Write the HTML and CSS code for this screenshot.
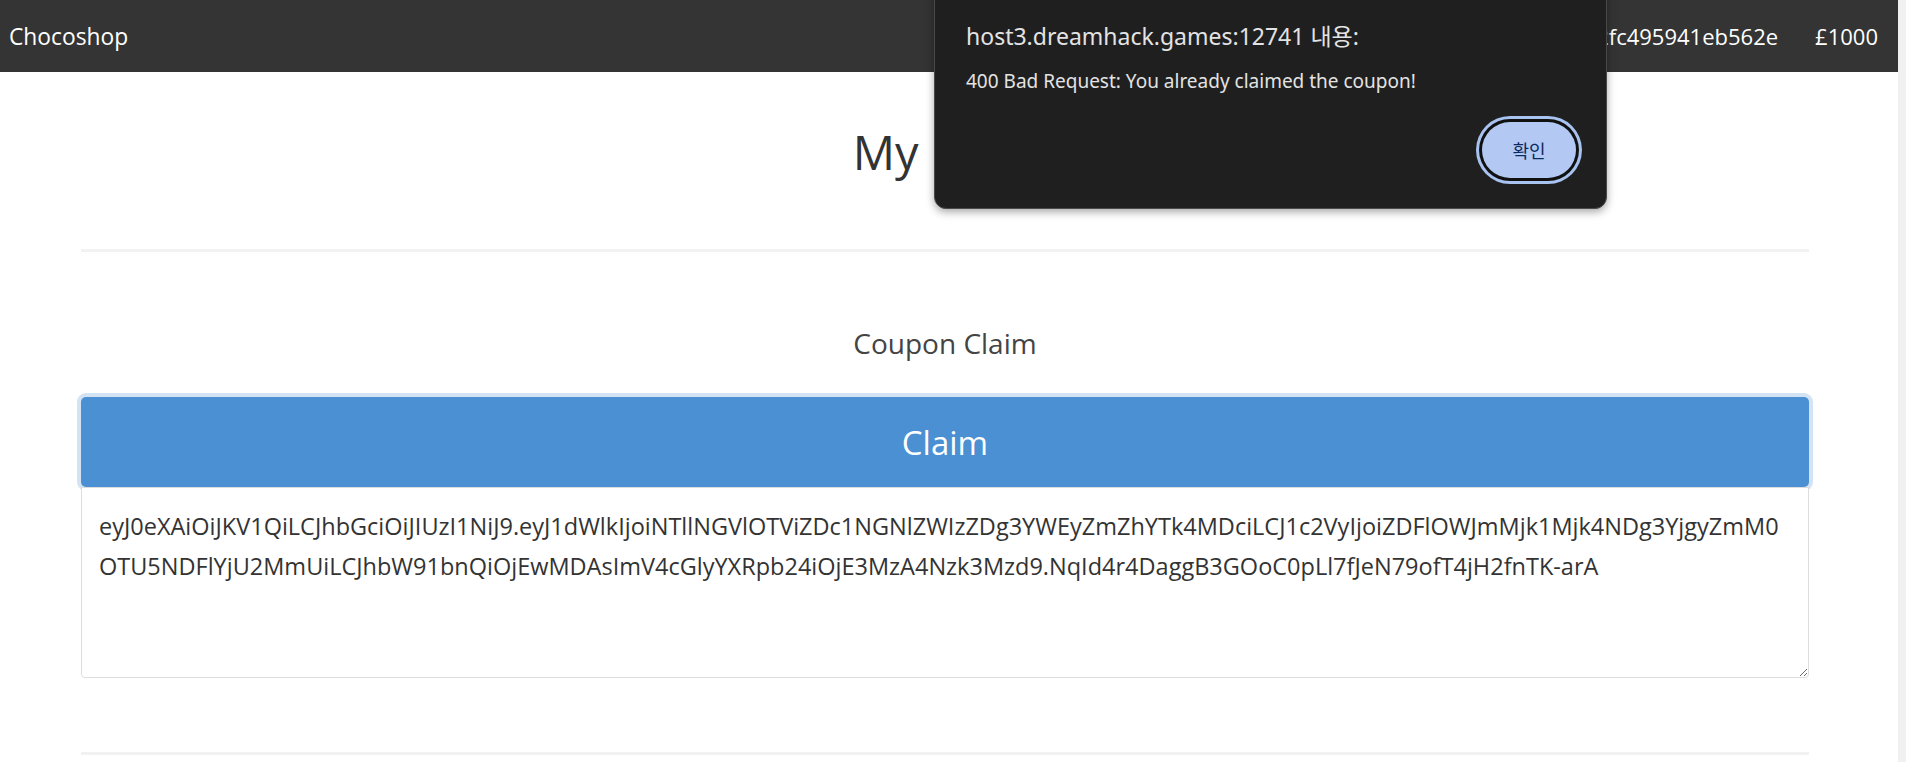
FILE: index.html
```html
<!DOCTYPE html>
<html lang="en">
<head>
    <meta charset="UTF-8">
    <meta name="viewport" content="width=device-width, initial-scale=1.0">
    <title>Chocoshop</title>
    <link rel="stylesheet" href="styles.css">
</head>
<body>
    <div class="window">
        <div class="page">
            <nav class="navbar">
                <a class="brand" href="#">Chocoshop</a>
                <ul class="nav-right">
                    <li>d1e9bf295298487b82fc495941eb562e</li>
                    <li>£1000</li>
                </ul>
            </nav>

            <main class="container">
                <h1>My Page</h1>
                <hr>
                <h3>Coupon Claim</h3>
                <button class="btn-claim">Claim</button>
                <textarea class="coupon" spellcheck="false">eyJ0eXAiOiJKV1QiLCJhbGciOiJIUzI1NiJ9.eyJ1dWlkIjoiNTllNGVlOTViZDc1NGNlZWIzZDg3YWEyZmZhYTk4MDciLCJ1c2VyIjoiZDFlOWJmMjk1Mjk4NDg3YjgyZmM0
OTU5NDFlYjU2MmUiLCJhbW91bnQiOjEwMDAsImV4cGlyYXRpb24iOjE3MzA4Nzk3Mzd9.NqId4r4DaggB3GOoC0pLl7fJeN79ofT4jH2fnTK-arA</textarea>
                <hr>
            </main>
        </div>
        <div class="scrollbar"></div>
    </div>

    <div class="alert-dialog">
        <div class="alert-title">host3.dreamhack.games:12741 내용:</div>
        <div class="alert-msg">400 Bad Request: You already claimed the coupon!</div>
        <div class="alert-actions">
            <button class="alert-ok">확인</button>
        </div>
    </div>
</body>
</html>
```

FILE: styles.css
```css
* {
    margin: 0;
    padding: 0;
    box-sizing: border-box;
}
body {
    font-family: "Open Sans", "Noto Sans", sans-serif;
    color: #333;
    background: #fff;
    overflow: hidden;
}
.window {
    display: flex;
    height: 100vh;
}
.page {
    flex: 1;
    overflow: hidden;
}
.scrollbar {
    width: 8px;
    background: #f1f1f1;
}

/* navbar */
.navbar {
    display: flex;
    align-items: center;
    justify-content: space-between;
    height: 72px;
    padding: 0 20px 0 9px;
    background: #343434;
    color: #fff;
    font-size: 22px;
}
.brand {
    color: #fff;
    font-size: 22.8px;
    text-decoration: none;
}
.nav-right {
    display: flex;
    gap: 37px;
    list-style: none;
}

/* content */
.container {
    margin: 0 89px 0 81px;
    text-align: center;
}
h1 {
    margin-top: 54px;
    font-size: 47px;
    line-height: 52px;
    font-weight: 500;
}
hr {
    border: 0;
    height: 3px;
    background: #f2f2f2;
    margin-top: 71px;
}
h3 {
    margin-top: 74px;
    font-size: 28px;
    line-height: 34px;
    font-weight: 400;
    color: #444;
}
.btn-claim {
    display: block;
    width: 100%;
    height: 90px;
    margin-top: 37px;
    border: 0;
    border-radius: 5px;
    background: #4a90d2;
    color: #fff;
    font-family: inherit;
    font-size: 33px;
    box-shadow: 0 0 0 4px #d3e3f4;
}
.coupon {
    display: block;
    width: 100%;
    height: 191px;
    padding: 18px 17px;
    border: 1px solid #ddd;
    border-radius: 0 0 4px 4px;
    font-family: inherit;
    font-size: 23.5px;
    line-height: 40px;
    color: #333;
    resize: vertical;
    overflow: hidden;
    position: relative;
}
.coupon + hr {
    margin-top: 74px;
}

/* browser alert */
.alert-dialog {
    position: absolute;
    top: -20px;
    left: 934px;
    width: 673px;
    display: flex;
    flex-direction: column;
    padding: 40px 30px 30px 31px;
    background: #1f1f1f;
    border: 1px solid #4a4a4a;
    border-radius: 12px;
    box-shadow: 0 3px 8px rgba(0, 0, 0, .35);
    color: #e3e3e3;
    font-family: "Noto Sans", "Noto Sans CJK KR", sans-serif;
}
.alert-title {
    font-size: 23px;
    line-height: 30px;
}
.alert-msg {
    margin-top: 18px;
    font-size: 19px;
    line-height: 24px;
}
.alert-actions {
    display: flex;
    justify-content: flex-end;
    margin-top: 29px;
}
.alert-ok {
    width: 94px;
    height: 56px;
    border: 0;
    border-radius: 28px;
    background: #b3c9f4;
    color: #0b2a5e;
    font-family: "Noto Sans CJK KR", sans-serif;
    font-size: 18px;
    box-shadow: 0 0 0 3px #111, 0 0 0 6px #a8c3f0;
}
```
